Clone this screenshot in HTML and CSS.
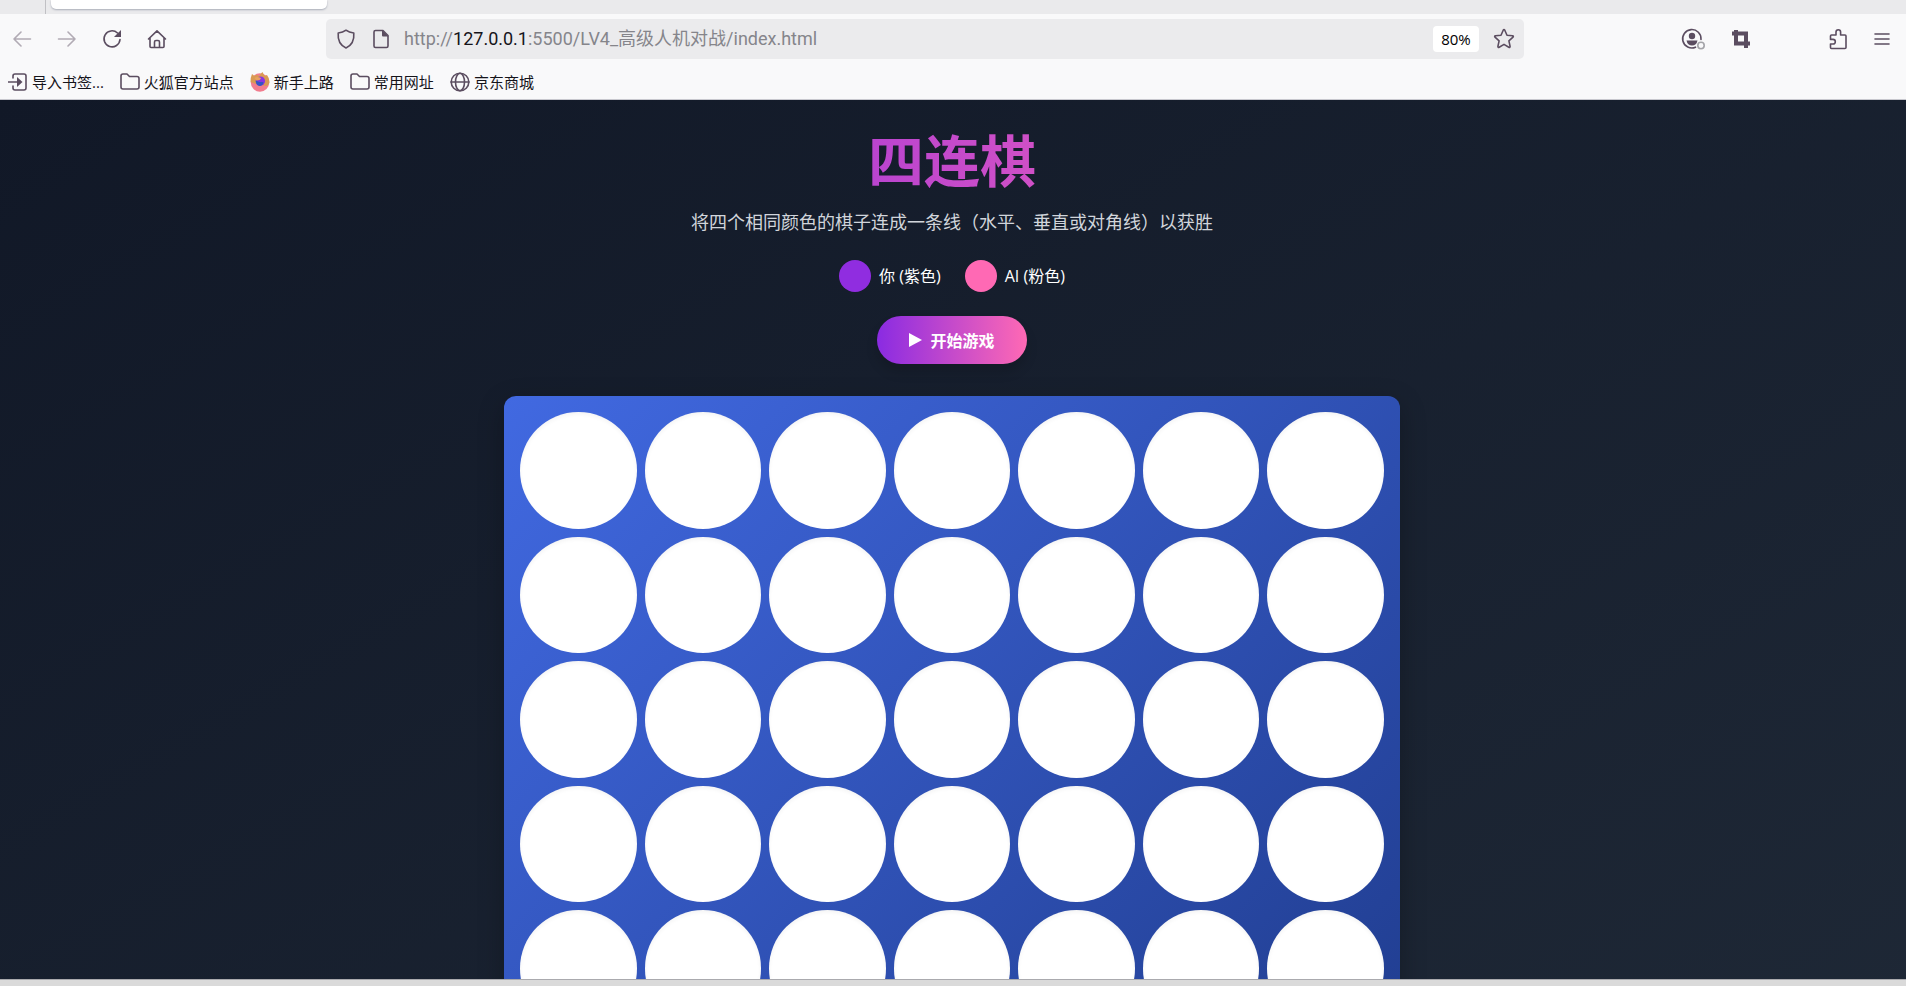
FILE: index.html
```html
<!DOCTYPE html>
<html lang="zh-CN">

<head>
    <meta charset="UTF-8">
    <meta name="viewport" content="width=device-width, initial-scale=1.0">
    <title>四连棋</title>
    <link rel="stylesheet" href="styles.css">
</head>

<body>
    <header class="browser">
        <div class="tab-strip">
            <div class="tab"></div>
        </div>

        <div class="toolbar">
            <nav class="nav-buttons">
                <button class="icon-btn" aria-label="后退" disabled>
                    <svg width="20" height="20" viewBox="0 0 20 20"><path d="M18.500 10H2M9 3L2 10l7 7"/></svg>
                </button>
                <button class="icon-btn" aria-label="前进" disabled>
                    <svg width="20" height="20" viewBox="0 0 20 20"><path d="M1.500 10H18M11 3l7 7-7 7"/></svg>
                </button>
                <button class="icon-btn" aria-label="刷新">
                    <svg width="20" height="20" viewBox="0 0 20 20"><path d="M15.500 4A8 8 0 1 0 18 10.500"/><path class="fill" d="M19 1v7h-7z"/></svg>
                </button>
                <button class="icon-btn" aria-label="主页">
                    <svg width="20" height="20" viewBox="0 0 20 20"><path d="M1.500 10L10 1.800 18.500 10M3 9v8.500q0 1 1 1h12q1 0 1-1V9M7.500 18v-5q0-1.500 1.500-1.500h2q1.500 0 1.500 1.500v5"/></svg>
                </button>
            </nav>

            <div class="url-bar">
                <svg width="20" height="20" viewBox="0 0 20 20"><path d="M10 1.200c2.400 1.800 5 2.500 7.800 2.800.5 6-1.300 12-7.800 14.900C3.500 16 1.700 10 2.200 4 5 3.700 7.600 3 10 1.200z"/></svg>
                <svg width="20" height="20" viewBox="0 0 20 20"><path d="M4.500 1.500H12l5 5v10.500q0 1.500-1.500 1.500h-11Q3 18.500 3 17V3q0-1.500 1.500-1.500z"/><path class="fill" d="M11 1l6.500 6.500H12q-1 0-1-1z"/></svg>
                <a class="url" href="#">http://<b>127.0.0.1</b>:5500/LV4_高级人机对战/index.html</a>
                <button class="zoom">80%</button>
                <button class="icon-btn" aria-label="收藏">
                    <svg width="22" height="22" viewBox="0 0 22 22"><path d="M10.200 2.200q.8-1.300 1.600 0l2.200 5 5.500.6q1.400.3.500 1.400l-4.100 3.700 1.200 5.400q0 1.500-1.300.9L11 16.400l-4.800 2.800q-1.300.6-1.300-.9l1.200-5.400L2 9.200q-.9-1.100.5-1.400L8 7.200z"/></svg>
                </button>
            </div>

            <div class="tools">
                <button class="icon-btn" aria-label="账户">
                    <svg width="24" height="22" viewBox="0 0 24 22"><path d="M20 11.500A9.200 9.200 0 1 0 14.500 19.200"/><circle class="fill" cx="11" cy="8" r="3.200"/><path class="fill" d="M5.500 12.500h11q-1 5-5.500 5t-5.500-5z"/><circle class="status" cx="20" cy="17.500" r="3.200"/></svg>
                </button>
                <button class="icon-btn" aria-label="截图">
                    <svg class="thick" width="20" height="20" viewBox="0 0 20 20"><path d="M5 1v13.500H19M1 4.500h14V19"/></svg>
                </button>
                <button class="icon-btn extension" aria-label="扩展">
                    <svg width="20" height="22" viewBox="0 0 20 22"><path d="M4 7h4V4a2.300 2.300 0 0 1 4.600 0v3H17q1 0 1 1v11.500q0 1-1 1H3.500q-1 0-1-1V16h2.500a2.300 2.300 0 0 0 0-4.600H2.500V8q0-1 1-1z"/></svg>
                </button>
                <button class="icon-btn" aria-label="菜单">
                    <svg width="16" height="16" viewBox="0 0 16 16"><path d="M1 3h14M1 8h14M1 13h14"/></svg>
                </button>
            </div>
        </div>

        <nav class="bookmarks">
            <a href="#">
                <svg width="20" height="20" viewBox="0 0 20 20"><path d="M5 6V4q0-2 2-2h9q2 0 2 2v12q0 2-2 2H7q-2 0-2-2v-2M0 10h12"/><path class="fill" d="M9 5l5.500 5L9 15z"/></svg>
                导入书签...
            </a>
            <a href="#">
                <svg width="20" height="20" viewBox="0 0 20 20"><path d="M1 4q0-2 2-2h4l2.500 2.500H17q2 0 2 2V15q0 2-2 2H3q-2 0-2-2z"/></svg>
                火狐官方站点
            </a>
            <a href="#">
                <svg class="fox" width="20" height="20" viewBox="0 0 20 20"><circle cx="10" cy="10.500" r="9.200" fill="#f27c8e"/><path d="M.5 10Q.5 5 2 2l2.500 2Q6 2 9.500 4q.5-2 3-4l2 4L17 3q3 4 2.300 8-1 3-3.500 3L6 12z" fill="#d99a52"/><circle cx="10.500" cy="9" r="4.600" fill="#8a35e0"/><path d="M5.500 8.500l4 1.500h4q-.5 4-4 4-3.500-.5-4-5.500z" fill="#3553c4"/><path d="M4.500 6q2.500-2 6.500 0-.5 2.500-4.500 2.500z" fill="#e8a060"/></svg>
                新手上路
            </a>
            <a href="#">
                <svg width="20" height="20" viewBox="0 0 20 20"><path d="M1 4q0-2 2-2h4l2.500 2.500H17q2 0 2 2V15q0 2-2 2H3q-2 0-2-2z"/></svg>
                常用网址
            </a>
            <a href="#">
                <svg width="20" height="20" viewBox="0 0 20 20"><circle cx="10" cy="10" r="8.800"/><ellipse cx="10" cy="10" rx="4.500" ry="8.800"/><path d="M1 10h18"/></svg>
                京东商城
            </a>
        </nav>
    </header>

    <main class="page">
        <div class="game">
            <h1>四连棋</h1>
            <p class="intro">将四个相同颜色的棋子连成一条线（水平、垂直或对角线）以获胜</p>

            <div class="players">
                <div class="player"><span class="chip purple"></span>你 (紫色)</div>
                <div class="player"><span class="chip pink"></span>AI (粉色)</div>
            </div>

            <button class="start">
                <svg width="13" height="14" viewBox="0 0 13 14"><path d="M0 0l13 7-13 7z"/></svg>
                开始游戏
            </button>

            <div class="board" id="board"></div>
        </div>
    </main>

    <footer class="bottom-edge"></footer>

    <script>
        const ROWS = 6, COLS = 7;
        const board = document.getElementById("board");

        // 生成棋盘格子
        for (let row = 0; row < ROWS; row++) {
            for (let col = 0; col < COLS; col++) {
                const cell = document.createElement("button");
                cell.className = "cell";
                cell.dataset.row = row;
                cell.dataset.col = col;
                cell.setAttribute("aria-label", `第${row + 1}行第${col + 1}列`);
                board.appendChild(cell);
            }
        }
    </script>
</body>

</html>
```
FILE: styles.css
```css
* {
    box-sizing: border-box;
}

body {
    margin: 0;
    height: 100vh;
    display: flex;
    flex-direction: column;
    overflow: hidden;
    font-family: "Open Sans", "Noto Sans CJK SC", sans-serif;
    font-size: 16px;
}

button {
    border: none;
    padding: 0;
    font: inherit;
    cursor: pointer;
}

/* 浏览器顶部 */
.browser {
    background: #f9f9fa;
    border-bottom: 1px solid #c8c8ce;
    color: #15141a;
}

.browser svg {
    display: block;
    flex: none;
    fill: none;
    stroke: #5b4d60;
    stroke-width: 1.6;
    stroke-linecap: round;
    stroke-linejoin: round;
}

.browser svg .fill {
    fill: #5b4d60;
    stroke: none;
}

.browser svg .status {
    stroke: #a4a4a8;
}

.browser .thick {
    stroke-width: 4;
    stroke-linecap: butt;
    stroke-linejoin: miter;
}

.browser .fox {
    stroke: none;
}

.tab-strip {
    height: 14px;
    padding-left: 45px;
    background: #eaeaec;
}

.tab {
    height: 14px;
    border-left: 1px solid #c0c0c4;
    padding-left: 5px;
}

.tab::before {
    content: "";
    display: block;
    width: 276px;
    height: 9px;
    border-radius: 0 0 5px 5px;
    background: #fff;
    box-shadow: 0 1px 2px #a9adb8;
}

.toolbar {
    height: 50px;
    padding: 0 16px 0 12px;
    display: flex;
    align-items: center;
}

.nav-buttons {
    display: flex;
    gap: 25px;
    flex: 0 0 314px;
}

.icon-btn {
    background: none;
}

.icon-btn:disabled {
    opacity: .45;
}

.url-bar {
    flex: 1;
    height: 40px;
    padding: 0 9px 0 10px;
    display: flex;
    align-items: center;
    gap: 15px;
    border-radius: 5px;
    background: #ebebed;
}

.url {
    flex: 1;
    margin-left: -2px;
    color: #85858b;
    font-family: Roboto, "Noto Sans CJK SC", sans-serif;
    font-size: 18px;
    line-height: 24px;
    text-decoration: none;
    white-space: nowrap;
}

.url b {
    color: #15141a;
    font-weight: normal;
}

.zoom {
    width: 46px;
    height: 26px;
    margin-right: -1px;
    border-radius: 4px;
    background: #fff;
    font-size: 15px;
}

.tools {
    flex: 0 0 366px;
    display: flex;
    align-items: center;
    justify-content: flex-end;
    gap: 26px;
}

.extension {
    margin-left: 51px;
}

.bookmarks {
    height: 35px;
    padding-left: 8px;
    display: flex;
    align-items: center;
    gap: 16px;
}

.bookmarks a {
    display: flex;
    align-items: center;
    gap: 4px;
    color: #15141a;
    font-size: 15px;
    line-height: 20px;
    text-decoration: none;
}

/* 游戏页面 */
.page {
    flex: 1;
    min-height: 0;
    overflow: hidden;
    color: #fff;
}

.game {
    padding: 32px 18px 32px 16px;
    display: flex;
    flex-direction: column;
    align-items: center;
    background: linear-gradient(to bottom right, #111827, #1f2937);
}

h1 {
    width: 100%;
    max-width: 896px;
    margin: 0 0 20px;
    font-size: 56px;
    line-height: 56px;
    text-align: center;
    color: transparent;
    background: linear-gradient(to right, #8a2be2, #ff69b4);
    background-clip: text;
    -webkit-background-clip: text;
}

.intro {
    margin: 0 0 24px;
    color: #d1d5db;
    font-size: 18px;
    line-height: 28px;
}

.players {
    display: flex;
    gap: 24px;
    margin-bottom: 24px;
}

.player {
    display: flex;
    align-items: center;
    gap: 8px;
    line-height: 32px;
}

.chip {
    width: 32px;
    height: 32px;
    border-radius: 50%;
}

.purple {
    background: #902de0;
}

.pink {
    background: #ff69b4;
}

.start {
    height: 48px;
    margin-bottom: 32px;
    padding: 0 32px;
    display: flex;
    align-items: center;
    gap: 8px;
    border-radius: 24px;
    background: linear-gradient(to right, #8a2be2, #ff69b4);
    box-shadow: 0 8px 12px rgba(0, 0, 0, .15);
    color: #fff;
    font-weight: bold;
}

.start svg {
    fill: #fff;
}

.board {
    width: 100%;
    max-width: 896px;
    padding: 16px;
    display: grid;
    grid-template-columns: repeat(7, 1fr);
    gap: 8px;
    border-radius: 12px;
    background: linear-gradient(135deg, #4169e1, #1e3a8a);
    box-shadow: 0 8px 26px rgba(0, 0, 0, .25);
}

.cell {
    aspect-ratio: 1;
    border-radius: 50%;
    background: #fff;
    box-shadow: inset 0 2px 4px rgba(0, 0, 0, .05);
}

.bottom-edge {
    height: 7px;
    border-top: 1px solid #aaaaae;
    background: #dadada;
}
```
